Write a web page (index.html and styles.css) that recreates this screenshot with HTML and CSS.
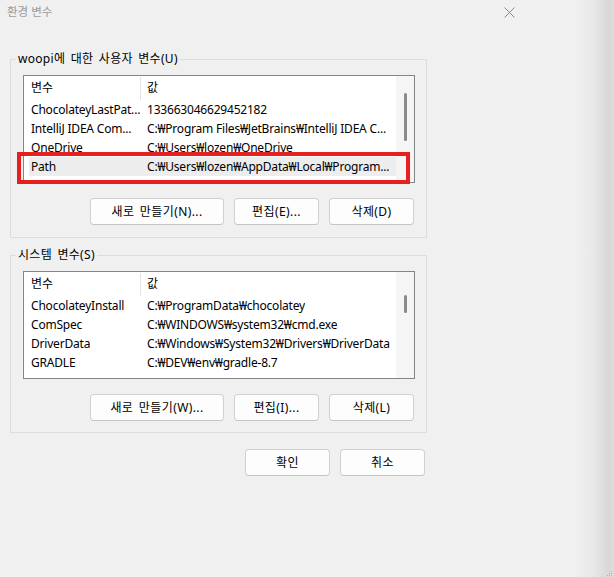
FILE: index.html
```html
<!DOCTYPE html>
<html lang="ko">
<head>
<meta charset="utf-8">
<title>환경 변수</title>
<link rel="stylesheet" href="styles.css">
</head>
<body>
<div class="window">
  <header class="titlebar">
    <span class="title">환경 변수</span>
    <svg class="close" width="11" height="11" viewBox="0 0 11 11"><path d="M0.5 0.5 L10.5 10.5 M10.5 0.5 L0.5 10.5" stroke="#8a8a8a" stroke-width="1" fill="none"/></svg>
  </header>
  <main class="content">
    <fieldset class="group">
      <legend>woopi에 대한 사용자 변수(U)</legend>
      <div class="group-body">
        <div class="listbox">
          <div class="list">
            <div class="row head"><span class="c1">변수</span><span class="c2">값</span></div>
            <div class="row"><span class="c1">ChocolateyLastPat...</span><span class="c2">133663046629452182</span></div>
            <div class="row"><span class="c1">IntelliJ IDEA Com...</span><span class="c2">C:₩Program Files₩JetBrains₩IntelliJ IDEA C...</span></div>
            <div class="row"><span class="c1">OneDrive</span><span class="c2">C:₩Users₩lozen₩OneDrive</span></div>
            <div class="row selected"><span class="c1">Path</span><span class="c2">C:₩Users₩lozen₩AppData₩Local₩Program...</span></div>
          </div>
          <div class="scrollbar"><div class="thumb thumb-user"></div></div>
          <div class="annotation"></div>
        </div>
        <div class="buttons">
          <button class="btn wide">새로 만들기(N)...</button>
          <button class="btn">편집(E)...</button>
          <button class="btn">삭제(D)</button>
        </div>
      </div>
    </fieldset>
    <fieldset class="group second">
      <legend>시스템 변수(S)</legend>
      <div class="group-body">
        <div class="listbox">
          <div class="list">
            <div class="row head"><span class="c1">변수</span><span class="c2">값</span></div>
            <div class="row"><span class="c1">ChocolateyInstall</span><span class="c2">C:₩ProgramData₩chocolatey</span></div>
            <div class="row"><span class="c1">ComSpec</span><span class="c2">C:₩WINDOWS₩system32₩cmd.exe</span></div>
            <div class="row"><span class="c1">DriverData</span><span class="c2">C:₩Windows₩System32₩Drivers₩DriverData</span></div>
            <div class="row"><span class="c1">GRADLE</span><span class="c2">C:₩DEV₩env₩gradle-8.7</span></div>
          </div>
          <div class="scrollbar"><div class="thumb thumb-sys"></div></div>
        </div>
        <div class="buttons">
          <button class="btn wide">새로 만들기(W)...</button>
          <button class="btn">편집(I)...</button>
          <button class="btn">삭제(L)</button>
        </div>
      </div>
    </fieldset>
    <div class="dialog-buttons">
      <button class="btn">확인</button>
      <button class="btn">취소</button>
    </div>
  </main>
  <div class="shadow"></div>
  <svg class="grip" width="8" height="8" viewBox="0 0 8 8">
    <rect x="6" y="2" width="1" height="1" fill="#b0b0b0"/>
    <rect x="4" y="4" width="1" height="1" fill="#b0b0b0"/>
    <rect x="6" y="4" width="1" height="1" fill="#b0b0b0"/>
    <rect x="2" y="6" width="1" height="1" fill="#b0b0b0"/>
    <rect x="4" y="6" width="1" height="1" fill="#b0b0b0"/>
    <rect x="6" y="6" width="1" height="1" fill="#b0b0b0"/>
  </svg>
</div>
</body>
</html>
```
FILE: styles.css
```css
* { box-sizing: border-box; }
html, body { margin: 0; padding: 0; }
body {
  background: #f0f0f0;
  font-family: "Noto Sans", "Noto Sans CJK KR", sans-serif;
  font-size: 12px;
  color: #000;
}
.window {
  position: relative;
  width: 614px;
  height: 577px;
  overflow: hidden;
}
.titlebar {
  height: 24px;
  display: flex;
  align-items: center;
  padding: 0 0 0 7px;
}
.title {
  color: #9a9a9a;
  font-size: 11.5px;
  line-height: 16px;
}
.close {
  margin-left: auto;
  margin-right: 99px;
  margin-top: 1px;
}
.content {
  width: 427px;
  padding: 27px 0 0 10px;
}
.group {
  margin: 0;
  padding: 8px 0 0 0;
  border: 1px solid #dcdcdc;
  min-width: 0;
}
.group.second { margin-top: 9px; }
.group legend {
  margin-left: 5px;
  padding: 0 2px;
  line-height: 16px;
  letter-spacing: 0.3px;
  word-spacing: 2px;
}
.group-body {
  padding: 0 11px 12px 12px;
}
.group.second .group-body { padding-bottom: 11px; }
.listbox {
  position: relative;
  height: 108px;
  border: 1px solid #858585;
  background: #fff;
  display: grid;
  grid-template-columns: 1fr 18px;
}
.list {
  overflow: hidden;
  min-width: 0;
}
.row {
  display: flex;
  height: 19px;
  line-height: 19px;
  margin-left: 5px;
  white-space: nowrap;
  letter-spacing: -0.2px;
}
.row.head {
  height: 24px;
  line-height: 24px;
  letter-spacing: 0;
}
.c1 {
  width: 112px;
  flex: none;
  padding-left: 2px;
  overflow: hidden;
}
.head .c1 {
  border-right: 1px solid #e3e3e3;
  margin: 1px 0 0 0;
  line-height: 22px;
}
.c2 {
  padding-left: 6px;
  overflow: hidden;
  min-width: 0;
}
.row.selected { background: #ededed; }
.scrollbar {
  background: #f5f5f5;
  display: flex;
  flex-direction: column;
  align-items: center;
}
.thumb {
  width: 3px;
  border-radius: 2px;
  background: #8a8a8a;
}
.thumb-user { margin-top: 17px; height: 48px; }
.thumb-sys { margin-top: 23px; height: 18px; }
.annotation {
  position: absolute;
  left: -7px;
  top: 76px;
  width: 393px;
  height: 32px;
  border: 4px solid #e5201f;
  pointer-events: none;
}
.buttons {
  display: flex;
  justify-content: flex-end;
  gap: 10px;
  margin-top: 15px;
  padding-right: 1px;
}
.btn {
  font: inherit;
  color: #000;
  width: 85px;
  height: 27px;
  padding: 0;
  background: #fdfdfd;
  border: 1px solid #d0d0d0;
  border-bottom-color: #c4c4c4;
  border-radius: 4px;
  line-height: 25px;
  letter-spacing: 0.4px;
  word-spacing: 2px;
}
.btn.wide { width: 134px; }
.dialog-buttons {
  display: flex;
  justify-content: flex-end;
  gap: 10px;
  margin-top: 16px;
  padding-right: 2px;
}
.shadow {
  position: absolute;
  top: 0;
  right: 0;
  width: 38px;
  height: 100%;
  background: linear-gradient(to right, rgba(0,0,0,0) 0%, rgba(0,0,0,0.03) 45%, rgba(0,0,0,0.1) 85%, rgba(0,0,0,0.08) 100%);
  pointer-events: none;
}
.grip {
  position: absolute;
  right: 1px;
  bottom: 0;
}
```
